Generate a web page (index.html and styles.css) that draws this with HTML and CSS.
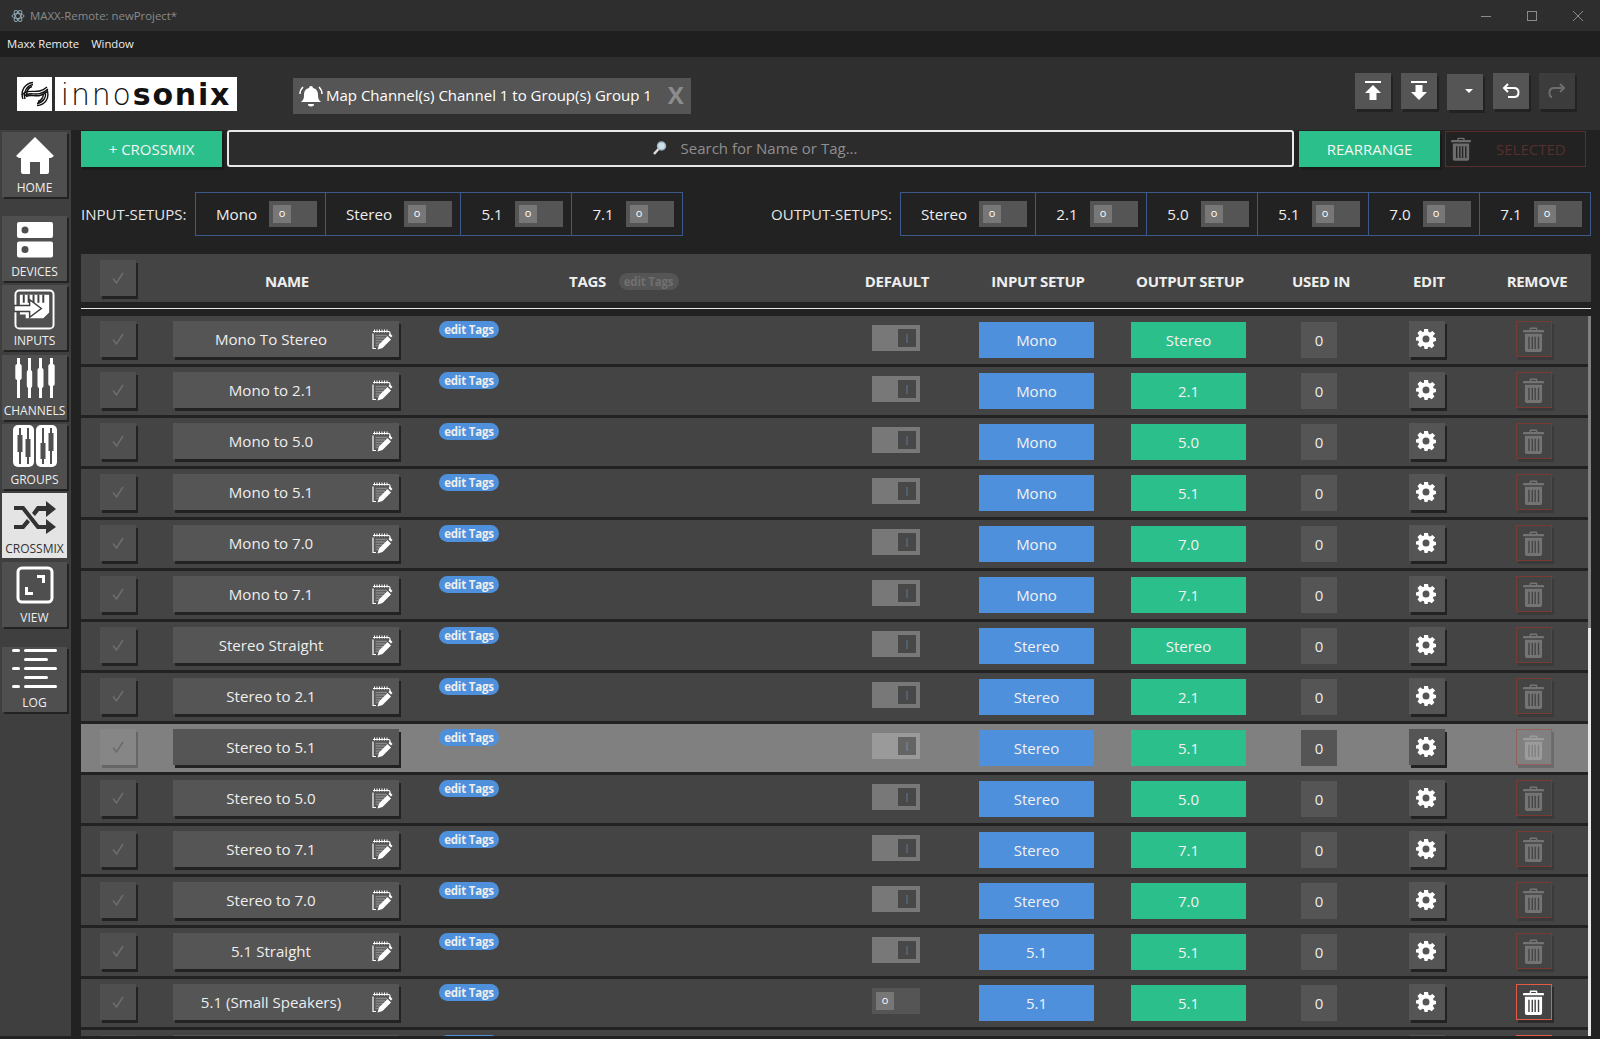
FILE: index.html
```html
<!DOCTYPE html>
<html lang="en">
<head>
    <meta charset="UTF-8">
    <title>MAXX-Remote: newProject*</title>
    <link rel="stylesheet" href="styles.css">
</head>
<body>
    <svg class="defs" width="0" height="0">
        <symbol id="i-note" viewBox="0 0 22 22">
            <path d="M2 5.500V20.500H5M2 3.500H17.500Q19 3.500 19 5V8" fill="none" stroke="#fff" stroke-width="1.200"/>
            <path d="M3.500 1.500v3M6 1.500v3M8.500 1.500v3M11 1.500v3M13.500 1.500v3M16 1.500v3" stroke="#fff" stroke-width="1"/>
            <path d="M4.500 7.500H16M4.500 10H14M4.500 12.500H12M4.500 15H9.500M4.500 17.500H7.500" stroke="#8a8a8a" stroke-width="1.500"/>
            <path d="M6.500 21.500l1.500-5 8.500-8.500 3.500 3.500-8.500 8.500z" fill="#fff"/>
            <path d="M17.500 7l1.500-1.500 2.500 2.500-1.500 1.500z" fill="#fff"/>
        </symbol>
        <symbol id="i-gear" viewBox="0 0 20 20">
            <path fill-rule="evenodd" d="M8 0h4l.5 2.800 1.500.7 2.400-1.600 2.700 2.700L17 7l.5 1.300 2.500.7v3l-2.500.7-.6 1.400 1.500 2.400-2.700 2.700-2.400-1.500-1.300.5L11.500 20h-3l-.5-2.700-1.400-.5-2.400 1.500-2.700-2.700 1.500-2.400-.6-1.400L0 11.500v-3l2.400-.7.6-1.400-1.500-2.400 2.700-2.700 2.400 1.600L8 2.800zM10 6.500a3.500 3.500 0 1 0 0 7 3.500 3.500 0 0 0 0-7z" fill="#fff"/>
        </symbol>
        <symbol id="i-trash" viewBox="0 0 22 26">
            <path fill-rule="evenodd" d="M7 3V1.500Q7 .5 8 .5h6q1 0 1 1V3h6q1 0 1 1v1.500H0V4q0-1 1-1zM8.500 3h5V2h-5zM2 7h18v17q0 2-2 2H4q-2 0-2-2zM5.500 10v13h1.500V10zM9 10v13h1.500V10zM12 10v13h1.500V10zM15.500 10v13H17V10z"/>
        </symbol>
        <symbol id="i-check" viewBox="0 0 14 14">
            <path d="M2 7.500L5.500 12 12 2" fill="none" stroke="currentColor" stroke-width="1.500"/>
        </symbol>
    </svg>

    <div class="titlebar">
        <svg class="app-icon" width="14" height="14" viewBox="0 0 14 14" fill="none" stroke="#8fa6b3" stroke-width="1"><ellipse cx="7" cy="7" rx="6" ry="2.500"/><ellipse cx="7" cy="7" rx="6" ry="2.500" transform="rotate(60 7 7)"/><ellipse cx="7" cy="7" rx="6" ry="2.500" transform="rotate(120 7 7)"/></svg>
        <span class="title-text">MAXX-Remote: newProject*</span>
        <div class="win-controls">
            <svg width="12" height="12" viewBox="0 0 12 12"><path d="M1 6.500H11" stroke="#8a8a8a"/></svg>
            <svg width="12" height="12" viewBox="0 0 12 12"><rect x="1.500" y="1.500" width="9" height="9" fill="none" stroke="#8a8a8a"/></svg>
            <svg width="12" height="12" viewBox="0 0 12 12"><path d="M1 1L11 11M11 1L1 11" stroke="#8a8a8a"/></svg>
        </div>
    </div>
    <div class="menubar"><span>Maxx Remote</span><span>Window</span></div>

    <div class="topbar">
        <div class="logo">
            <div class="logo-mark">
                <svg width="30" height="26" viewBox="0 0 30 26" fill="none" stroke="#111" stroke-width="1.400"><path d="M3 18C0 10 5 2 13 1.500M5 18C3 11 7 4.500 13 3.500M7 16C6 11 8 7 12 5.500"/><path d="M2 14C9 6 17 15 27 6M4 15C11 9 17 18 28 8M6 15.500C12 12 18 19 28 10"/><path d="M27 9C30 17 25 24 17 24.500M25 11C27 16 23 21.500 17 22.500M23 13C24 16 21 19.500 18 20.500"/></svg>
            </div>
            <div class="logo-text"><span>inno</span><b>sonix</b></div>
        </div>
        <div class="notice">
            <svg width="24" height="24" viewBox="0 0 24 24" fill="#fff"><path d="M12 2a2 2 0 0 1 2 2c4 1 5 4 5 7 0 4 1 5 3 7H2c2-2 3-3 3-7 0-3 1-6 5-7a2 2 0 0 1 2-2zM9 20h6a3 2.500 0 0 1-6 0z"/><path d="M4 3Q1 6 1 10M20 3q3 3 3 7" fill="none" stroke="#fff" stroke-width="1.500"/></svg>
            <span class="notice-text">Map Channel(s) Channel 1 to Group(s) Group 1</span>
            <span class="notice-close">X</span>
        </div>
        <div class="tools">
            <div class="tool"><svg width="18" height="22" viewBox="0 0 18 22" fill="#fff"><path d="M1 1H17V3H1zM9 5l8 8H12.500V20H5.500V13H1z"/></svg></div>
            <div class="tool"><svg width="18" height="22" viewBox="0 0 18 22" fill="#fff"><path d="M1 1H17V3H1zM5.500 5H12.500V12H17L9 20 1 12H5.500z"/></svg></div>
            <div class="tool tool-low"><svg class="caret" width="10" height="6" viewBox="0 0 10 6" fill="#fff"><path d="M1 1H9L5 5z"/></svg></div>
            <div class="tool"><svg width="18" height="16" viewBox="0 0 18 16" fill="none" stroke="#fff" stroke-width="2"><path d="M6 1L2 5 6 9" /><path d="M2 5H12Q16.500 5 16.500 9.500T12 14H6"/></svg></div>
            <div class="tool tool-off"><svg width="18" height="16" viewBox="0 0 18 16" fill="none" stroke="#6e6e6e" stroke-width="2"><path d="M12 1L16 5 12 9"/><path d="M16 5H6Q1.500 5 1.500 9.500T4 14"/></svg></div>
        </div>
    </div>

    <div class="app">
        <div class="sidebar">
            <div class="nav-btn nav-home">
                <svg width="38" height="38" viewBox="0 0 38 38" fill="#fff"><path d="M19 1L38 20 35 22H33V36Q33 38 31 38H24V26H14V38H7Q5 38 5 36V22H3L0 20z"/></svg>
                <span>HOME</span>
            </div>
            <div class="nav-btn">
                <svg width="36" height="36" viewBox="0 0 36 36" fill="#fff"><path fill-rule="evenodd" d="M2 0H34Q36 0 36 2V14Q36 16 34 16H2Q0 16 0 14V2Q0 0 2 0zM8 4.500a3.500 3.500 0 1 0 0 7 3.500 3.500 0 0 0 0-7zM2 19.500H34Q36 19.500 36 21.500V33.500Q36 35.500 34 35.500H2Q0 35.500 0 33.500V21.500Q0 19.500 2 19.500zM8 24a3.500 3.500 0 1 0 0 7 3.500 3.500 0 0 0 0-7z"/></svg>
                <span>DEVICES</span>
            </div>
            <div class="nav-btn nav-inputs">
                <svg width="41" height="41" viewBox="0 0 42 42"><rect x="1.500" y="1.500" width="39" height="39" rx="4" fill="none" stroke="#fff" stroke-width="2"/><path d="M6 6H36V24L30 30H12V26H6z" fill="#fff"/><path d="M10 6V14M15 6V14M20 6V14M25 6V14M30 6V14" stroke="#3f3f3f" stroke-width="2"/><path d="M0 17H16V11L28 20 16 29V23H0z" fill="#fff" stroke="#3f3f3f" stroke-width="1.500"/></svg>
                <span>INPUTS</span>
            </div>
            <div class="nav-btn nav-channels">
                <svg width="42" height="40" viewBox="0 0 42 40" fill="#fff"><rect x="3" width="3" height="40"/><rect x="1.300" y="6" width="6.400" height="16" rx="2"/><rect x="14" width="3" height="40"/><rect x="12.800" y="12" width="5.400" height="18" rx="2"/><rect x="25" width="3" height="40"/><rect x="23.500" y="10" width="6" height="20" rx="2"/><rect x="36" width="3" height="40"/><rect x="34.300" y="6" width="6.400" height="22" rx="2"/></svg>
                <span>CHANNELS</span>
            </div>
            <div class="nav-btn nav-groups">
                <svg width="44" height="42" viewBox="0 0 44 42"><rect x="0" y="0" width="21" height="42" rx="5" fill="#fff"/><rect x="23" y="0" width="21" height="42" rx="5" fill="#fff"/><path d="M6 3H8V10H9.500V27H8V39H6V27H4.500V10H6zM14 3H16V14H17.500V32H16V39H14V32H12.500V14H14zM29 3H31V18H32.500V34H31V39H29V34H27.500V18H29zM37 3H39V8H40.500V26H39V39H37V26H35.500V8H37z" fill="#4f4f4f"/></svg>
                <span>GROUPS</span>
            </div>
            <div class="nav-btn nav-active">
                <svg width="42" height="34" viewBox="0 0 42 34" fill="#333"><path d="M0 5H10L25 24H32V18L42 26 32 33V28H23L8 9H0zM0 24H8L13 18 16 21 10 28H0zM23 5H32V0L42 8 32 16V10H25L21 15 18 12z"/></svg>
                <span>CROSSMIX</span>
            </div>
            <div class="nav-btn">
                <svg width="38" height="38" viewBox="0 0 38 38"><rect x="2" y="2" width="34" height="34" rx="4" fill="none" stroke="#fff" stroke-width="3"/><path d="M21 9H29V17H26V12H21zM9 21H12V26H17V29H9z" fill="#fff"/></svg>
                <span>VIEW</span>
            </div>
            <div class="nav-btn nav-log">
                <svg width="46" height="40" viewBox="0 0 46 40" fill="#fff"><rect x="0" y="0" width="8" height="3" rx="1.500"/><rect x="12" y="0" width="33" height="3" rx="1.500"/><rect x="12" y="9" width="24" height="3" rx="1.500"/><rect x="0" y="18" width="8" height="3" rx="1.500"/><rect x="12" y="18" width="33" height="3" rx="1.500"/><rect x="12" y="27" width="24" height="3" rx="1.500"/><rect x="0" y="36" width="8" height="3" rx="1.500"/><rect x="12" y="36" width="33" height="3" rx="1.500"/></svg>
                <span>LOG</span>
            </div>
        </div>

        <div class="main">
            <div class="actions">
                <div class="btn-green">+ CROSSMIX</div>
                <div class="search">
                    <svg width="16" height="16" viewBox="0 0 16 16"><circle cx="9.500" cy="6" r="4" fill="#cfe0ea" stroke="#9fb4c0" stroke-width="1.500"/><path d="M6.500 9L2 14" stroke="#ddd" stroke-width="2.500"/></svg>
                    <span>Search for Name or Tag...</span>
                </div>
                <div class="btn-green">REARRANGE</div>
                <div class="btn-selected">
                    <svg class="trash-off" width="20" height="24"><use href="#i-trash"/></svg>
                    <span>SELECTED</span>
                </div>
            </div>

            <div class="setups">
                <span class="setups-label label-in">INPUT-SETUPS:</span>
                <div class="setup-group">
                    <div class="setup-cell cell-mono"><span>Mono</span><div class="toggle toggle-on"><i>o</i></div></div>
                    <div class="setup-cell cell-wide"><span>Stereo</span><div class="toggle toggle-on"><i>o</i></div></div>
                    <div class="setup-cell"><span>5.1</span><div class="toggle toggle-on"><i>o</i></div></div>
                    <div class="setup-cell"><span>7.1</span><div class="toggle toggle-on"><i>o</i></div></div>
                </div>
                <span class="setups-label label-out">OUTPUT-SETUPS:</span>
                <div class="setup-group">
                    <div class="setup-cell cell-wide-out"><span>Stereo</span><div class="toggle toggle-on"><i>o</i></div></div>
                    <div class="setup-cell"><span>2.1</span><div class="toggle toggle-on"><i>o</i></div></div>
                    <div class="setup-cell"><span>5.0</span><div class="toggle toggle-on"><i>o</i></div></div>
                    <div class="setup-cell"><span>5.1</span><div class="toggle toggle-on"><i>o</i></div></div>
                    <div class="setup-cell"><span>7.0</span><div class="toggle toggle-on"><i>o</i></div></div>
                    <div class="setup-cell"><span>7.1</span><div class="toggle toggle-on"><i>o</i></div></div>
                </div>
            </div>

            <div class="table-head">
                <div class="check check-head"><svg width="14" height="14"><use href="#i-check"/></svg></div>
                <div class="th th-name">NAME</div>
                <div class="th th-tags">TAGS <span class="pill pill-off">edit Tags</span></div>
                <div class="th th-default">DEFAULT</div>
                <div class="th th-input">INPUT SETUP</div>
                <div class="th th-output">OUTPUT SETUP</div>
                <div class="th th-used">USED IN</div>
                <div class="th th-edit">EDIT</div>
                <div class="th th-remove">REMOVE</div>
            </div>
            <div class="head-line"></div>

            <div class="rows-wrap">
            <div class="rows">
                <div class="row"><div class="check"><svg width="14" height="14"><use href="#i-check"/></svg></div><div class="name"><span>Mono To Stereo</span><svg width="22" height="22"><use href="#i-note"/></svg></div><div><span class="pill">edit Tags</span></div><div class="toggle toggle-off"><i>|</i></div><div class="setup-in">Mono</div><div class="setup-out">Stereo</div><div class="used">0</div><div class="edit"><svg width="20" height="20"><use href="#i-gear"/></svg></div><div class="remove"><svg width="21" height="25"><use href="#i-trash"/></svg></div></div>
                <div class="row"><div class="check"><svg width="14" height="14"><use href="#i-check"/></svg></div><div class="name"><span>Mono to 2.1</span><svg width="22" height="22"><use href="#i-note"/></svg></div><div><span class="pill">edit Tags</span></div><div class="toggle toggle-off"><i>|</i></div><div class="setup-in">Mono</div><div class="setup-out">2.1</div><div class="used">0</div><div class="edit"><svg width="20" height="20"><use href="#i-gear"/></svg></div><div class="remove"><svg width="21" height="25"><use href="#i-trash"/></svg></div></div>
                <div class="row"><div class="check"><svg width="14" height="14"><use href="#i-check"/></svg></div><div class="name"><span>Mono to 5.0</span><svg width="22" height="22"><use href="#i-note"/></svg></div><div><span class="pill">edit Tags</span></div><div class="toggle toggle-off"><i>|</i></div><div class="setup-in">Mono</div><div class="setup-out">5.0</div><div class="used">0</div><div class="edit"><svg width="20" height="20"><use href="#i-gear"/></svg></div><div class="remove"><svg width="21" height="25"><use href="#i-trash"/></svg></div></div>
                <div class="row"><div class="check"><svg width="14" height="14"><use href="#i-check"/></svg></div><div class="name"><span>Mono to 5.1</span><svg width="22" height="22"><use href="#i-note"/></svg></div><div><span class="pill">edit Tags</span></div><div class="toggle toggle-off"><i>|</i></div><div class="setup-in">Mono</div><div class="setup-out">5.1</div><div class="used">0</div><div class="edit"><svg width="20" height="20"><use href="#i-gear"/></svg></div><div class="remove"><svg width="21" height="25"><use href="#i-trash"/></svg></div></div>
                <div class="row"><div class="check"><svg width="14" height="14"><use href="#i-check"/></svg></div><div class="name"><span>Mono to 7.0</span><svg width="22" height="22"><use href="#i-note"/></svg></div><div><span class="pill">edit Tags</span></div><div class="toggle toggle-off"><i>|</i></div><div class="setup-in">Mono</div><div class="setup-out">7.0</div><div class="used">0</div><div class="edit"><svg width="20" height="20"><use href="#i-gear"/></svg></div><div class="remove"><svg width="21" height="25"><use href="#i-trash"/></svg></div></div>
                <div class="row"><div class="check"><svg width="14" height="14"><use href="#i-check"/></svg></div><div class="name"><span>Mono to 7.1</span><svg width="22" height="22"><use href="#i-note"/></svg></div><div><span class="pill">edit Tags</span></div><div class="toggle toggle-off"><i>|</i></div><div class="setup-in">Mono</div><div class="setup-out">7.1</div><div class="used">0</div><div class="edit"><svg width="20" height="20"><use href="#i-gear"/></svg></div><div class="remove"><svg width="21" height="25"><use href="#i-trash"/></svg></div></div>
                <div class="row"><div class="check"><svg width="14" height="14"><use href="#i-check"/></svg></div><div class="name"><span>Stereo Straight</span><svg width="22" height="22"><use href="#i-note"/></svg></div><div><span class="pill">edit Tags</span></div><div class="toggle toggle-off"><i>|</i></div><div class="setup-in">Stereo</div><div class="setup-out">Stereo</div><div class="used">0</div><div class="edit"><svg width="20" height="20"><use href="#i-gear"/></svg></div><div class="remove"><svg width="21" height="25"><use href="#i-trash"/></svg></div></div>
                <div class="row"><div class="check"><svg width="14" height="14"><use href="#i-check"/></svg></div><div class="name"><span>Stereo to 2.1</span><svg width="22" height="22"><use href="#i-note"/></svg></div><div><span class="pill">edit Tags</span></div><div class="toggle toggle-off"><i>|</i></div><div class="setup-in">Stereo</div><div class="setup-out">2.1</div><div class="used">0</div><div class="edit"><svg width="20" height="20"><use href="#i-gear"/></svg></div><div class="remove"><svg width="21" height="25"><use href="#i-trash"/></svg></div></div>
                <div class="row row-hover"><div class="check"><svg width="14" height="14"><use href="#i-check"/></svg></div><div class="name"><span>Stereo to 5.1</span><svg width="22" height="22"><use href="#i-note"/></svg></div><div><span class="pill">edit Tags</span></div><div class="toggle toggle-off"><i>|</i></div><div class="setup-in">Stereo</div><div class="setup-out">5.1</div><div class="used">0</div><div class="edit"><svg width="20" height="20"><use href="#i-gear"/></svg></div><div class="remove"><svg width="21" height="25"><use href="#i-trash"/></svg></div></div>
                <div class="row"><div class="check"><svg width="14" height="14"><use href="#i-check"/></svg></div><div class="name"><span>Stereo to 5.0</span><svg width="22" height="22"><use href="#i-note"/></svg></div><div><span class="pill">edit Tags</span></div><div class="toggle toggle-off"><i>|</i></div><div class="setup-in">Stereo</div><div class="setup-out">5.0</div><div class="used">0</div><div class="edit"><svg width="20" height="20"><use href="#i-gear"/></svg></div><div class="remove"><svg width="21" height="25"><use href="#i-trash"/></svg></div></div>
                <div class="row"><div class="check"><svg width="14" height="14"><use href="#i-check"/></svg></div><div class="name"><span>Stereo to 7.1</span><svg width="22" height="22"><use href="#i-note"/></svg></div><div><span class="pill">edit Tags</span></div><div class="toggle toggle-off"><i>|</i></div><div class="setup-in">Stereo</div><div class="setup-out">7.1</div><div class="used">0</div><div class="edit"><svg width="20" height="20"><use href="#i-gear"/></svg></div><div class="remove"><svg width="21" height="25"><use href="#i-trash"/></svg></div></div>
                <div class="row"><div class="check"><svg width="14" height="14"><use href="#i-check"/></svg></div><div class="name"><span>Stereo to 7.0</span><svg width="22" height="22"><use href="#i-note"/></svg></div><div><span class="pill">edit Tags</span></div><div class="toggle toggle-off"><i>|</i></div><div class="setup-in">Stereo</div><div class="setup-out">7.0</div><div class="used">0</div><div class="edit"><svg width="20" height="20"><use href="#i-gear"/></svg></div><div class="remove"><svg width="21" height="25"><use href="#i-trash"/></svg></div></div>
                <div class="row"><div class="check"><svg width="14" height="14"><use href="#i-check"/></svg></div><div class="name"><span>5.1 Straight</span><svg width="22" height="22"><use href="#i-note"/></svg></div><div><span class="pill">edit Tags</span></div><div class="toggle toggle-off"><i>|</i></div><div class="setup-in">5.1</div><div class="setup-out">5.1</div><div class="used">0</div><div class="edit"><svg width="20" height="20"><use href="#i-gear"/></svg></div><div class="remove"><svg width="21" height="25"><use href="#i-trash"/></svg></div></div>
                <div class="row"><div class="check"><svg width="14" height="14"><use href="#i-check"/></svg></div><div class="name"><span>5.1 (Small Speakers)</span><svg width="22" height="22"><use href="#i-note"/></svg></div><div><span class="pill">edit Tags</span></div><div class="toggle toggle-on toggle-row"><i>o</i></div><div class="setup-in">5.1</div><div class="setup-out">5.1</div><div class="used">0</div><div class="edit"><svg width="20" height="20"><use href="#i-gear"/></svg></div><div class="remove remove-on"><svg width="21" height="25"><use href="#i-trash"/></svg></div></div>
                <div class="row"><div class="check"></div><div class="name"></div><div><span class="pill pill-cut"></span></div><div class="toggle toggle-off"></div><div class="setup-in"></div><div class="setup-out"></div><div class="used"></div><div class="edit"></div><div class="remove remove-on"></div></div>
            </div>
            <div class="scrollbar"></div>
            </div>
        </div>
    </div>
</body>
</html>
```
FILE: styles.css
```css
html {
    background: #222;
}
body {
    margin: 0;
    width: 1600px;
    height: 1036px;
    overflow: hidden;
    background: #222;
    color: #eee;
    font-family: "Open Sans", "Noto Sans", sans-serif;
    font-size: 15px;
}
.defs {
    display: block;
    height: 0;
}

/* window chrome */
.titlebar {
    height: 31px;
    background: #2e2e2e;
    display: flex;
    align-items: center;
    padding-left: 11px;
    box-sizing: border-box;
}
.title-text {
    margin-left: 5px;
    font-size: 11.400px;
    color: #8a8a8a;
}
.win-controls {
    margin-left: auto;
    display: flex;
    gap: 34px;
    padding-right: 16px;
}
.menubar {
    height: 26px;
    background: #1f1f1f;
    display: flex;
    align-items: center;
    gap: 12px;
    padding: 0 0 2px 7px;
    box-sizing: border-box;
    font-size: 11.300px;
    color: #eee;
}
.topbar {
    height: 73px;
    background: #2f2f2f;
    display: flex;
    align-items: flex-start;
}
.logo {
    display: flex;
    gap: 3px;
    margin: 20px 0 0 17px;
}
.logo-mark {
    width: 35px;
    height: 34px;
    background: #fff;
    display: flex;
    align-items: center;
    justify-content: center;
}
.logo-text {
    width: 182px;
    height: 34px;
    background: #fff;
    color: #111;
    font-family: "DejaVu Sans", sans-serif;
    font-size: 30px;
    line-height: 35px;
    text-align: center;
    letter-spacing: 1.800px;
    white-space: nowrap;
}
.logo-text span {
    font-weight: 200;
}
.notice {
    margin: 21px 0 0 56px;
    width: 398px;
    height: 36px;
    flex: none;
    background: #555;
    display: flex;
    align-items: center;
    padding-left: 6px;
    box-sizing: border-box;
    color: #fff;
    font-size: 15px;
    white-space: nowrap;
}
.notice-text {
    margin: 0 0 2px 3px;
}
.notice-close {
    margin: 0 0 4px 16px;
    font-size: 24px;
    font-weight: 700;
    color: #8c8c8c;
}
.tools {
    margin: 16px 0 0 664px;
    display: flex;
    gap: 10px;
    align-items: flex-start;
}
.tool {
    width: 36px;
    height: 36px;
    background: #555;
    box-shadow: 2px 3px 0 #222;
    display: flex;
    align-items: center;
    justify-content: center;
}
.tool-low {
    margin-top: 1px;
}
.tool-off {
    background: #3c3c3c;
}
.caret {
    margin: 0 0 3px 8px;
}

/* layout */
.app {
    display: flex;
    height: 906px;
}
.sidebar {
    width: 71px;
    flex: none;
    background: #3f3f3f;
    padding: 2px 0 0 2px;
    box-sizing: border-box;
    display: flex;
    flex-direction: column;
    gap: 4px;
}
.nav-btn {
    width: 65px;
    height: 65px;
    background: #4f4f4f;
    box-shadow: 2px 2px 0 #222;
    display: flex;
    flex-direction: column;
    align-items: center;
    justify-content: flex-end;
    color: #eee;
    font-size: 12px;
    line-height: 16px;
    padding-bottom: 1px;
    box-sizing: border-box;
}
.nav-btn svg {
    margin-bottom: 6px;
    flex: none;
}
.nav-home {
    margin-bottom: 15px;
}
.nav-btn.nav-inputs svg {
    margin-bottom: 3px;
}
.nav-channels {
    margin-top: 1px;
}
.nav-btn.nav-channels svg,
.nav-btn.nav-groups svg {
    margin-bottom: 5px;
}
.nav-log {
    margin-top: 16px;
}
.nav-active {
    background: #e4e4e4;
    color: #333;
    box-shadow: none;
}
.main {
    margin-left: 10px;
    width: 1510px;
    flex: none;
}

/* actions row */
.actions {
    display: flex;
    gap: 5px;
    height: 37px;
    align-items: center;
}
.btn-green {
    width: 141px;
    height: 36px;
    background: #2bbf8b;
    color: #f4f4f4;
    box-shadow: 2px 3px 0 #1a1a1a;
    display: flex;
    align-items: center;
    justify-content: center;
    font-size: 15px;
    flex: none;
}
.search {
    width: 1067px;
    height: 37px;
    box-sizing: border-box;
    border: 2px solid #e8e8e8;
    border-radius: 3px;
    background: #2c2c2c;
    display: flex;
    align-items: center;
    justify-content: center;
    gap: 13px;
    color: #8f8f8f;
    font-size: 15px;
    padding: 0 12px 2px 0;
    flex: none;
}
.btn-selected {
    width: 141px;
    height: 36px;
    box-sizing: border-box;
    border: 1px solid #5a2e29;
    color: #55302c;
    display: flex;
    align-items: center;
    font-size: 15px;
    padding-left: 5px;
    flex: none;
}
.btn-selected span {
    margin-left: 25px;
}
.trash-off {
    fill: #6c6c6c;
}

/* setups row */
.setups {
    display: flex;
    align-items: center;
    margin-top: 25px;
    height: 44px;
}
.setups-label {
    font-size: 15px;
    color: #e6e6e6;
}
.label-in {
    width: 115px;
}
.label-out {
    margin-left: 88px;
    width: 130px;
}
.setup-group {
    display: flex;
    height: 44px;
    border: 1px solid #3b5a8a;
    box-sizing: border-box;
}
.setup-cell {
    width: 111px;
    box-sizing: border-box;
    display: flex;
    align-items: center;
    padding-right: 8px;
    border-left: 1px solid #3b5a8a;
}
.setup-cell:first-child {
    border-left: 0;
}
.setup-cell > span {
    flex: 1;
    text-align: center;
    font-size: 15.200px;
    padding-left: 8px;
}
.cell-mono {
    width: 129px;
}
.cell-wide {
    width: 135px;
}
.cell-wide-out {
    width: 134px;
}
.toggle {
    width: 48px;
    height: 26px;
    flex: none;
    display: flex;
    align-items: center;
    padding: 0 4px;
    box-sizing: border-box;
}
.toggle i {
    width: 18px;
    height: 18px;
    display: block;
    font-style: normal;
    text-align: center;
    font-size: 11px;
    line-height: 16px;
}
.toggle-on {
    background: #555;
}
.toggle-on i {
    background: #777;
    color: #fff;
}
.toggle-off {
    background: #787878;
    justify-content: flex-end;
}
.toggle-off i {
    background: #484848;
    color: #8a8a8a;
    font-size: 9px;
    line-height: 18px;
}

/* table */
.table-head {
    margin-top: 18px;
    height: 48px;
    background: #444;
    position: relative;
    display: grid;
    grid-template-columns: 19px 36px 1fr;
    align-items: center;
}
.th {
    position: absolute;
    top: 0;
    line-height: 54px;
    font-weight: 700;
    font-size: 15px;
    letter-spacing: -0.3px;
    color: #eee;
    transform: translateX(-50%);
    white-space: nowrap;
}
.th-name { left: 206px; }
.th-tags { left: 488px; transform: none; }
.th-default { left: 816px; }
.th-input { left: 957px; }
.th-output { left: 1109px; }
.th-used { left: 1240px; }
.th-edit { left: 1348px; }
.th-remove { left: 1456px; }
.th-tags .pill {
    margin-left: 9px;
}
.check-head {
    grid-column: 2;
}
.head-line {
    height: 1px;
    margin-top: 6px;
    background: #e8e8e8;
}
.rows-wrap {
    margin-top: 7px;
    height: 720px;
    display: flex;
}
.rows {
    flex: 1;
    overflow: hidden;
    display: flex;
    flex-direction: column;
    gap: 3px;
}
.scrollbar {
    width: 3px;
    background: linear-gradient(#808080 312px, #e8e8e8 312px);
}
.row {
    height: 48px;
    flex: none;
    background: #444;
    padding-left: 19px;
    display: grid;
    grid-template-columns: 73px 266px 433px 107px 152px 170px 108px 107px 1fr;
    align-items: start;
}
.check {
    width: 36px;
    height: 36px;
    margin-top: 5px;
    background: #4f4f4f;
    color: #6e6e6e;
    box-shadow: 2px 3px 0 #222;
    display: flex;
    align-items: center;
    justify-content: center;
}
.check-head {
    margin-top: 0;
}
.name {
    width: 226px;
    height: 36px;
    margin-top: 5px;
    background: #555;
    box-shadow: 2px 3px 0 #222;
    display: flex;
    align-items: center;
    font-size: 15.100px;
    color: #eee;
    box-sizing: border-box;
    padding-right: 6px;
}
.name span {
    flex: 1;
    text-align: center;
    white-space: nowrap;
    padding-right: 2px;
}
.pill {
    display: inline-block;
    width: 60px;
    height: 17px;
    border-radius: 9px;
    background: #4f90dc;
    color: #eee;
    font-size: 11.500px;
    font-weight: 700;
    line-height: 18px;
    text-align: center;
    letter-spacing: -0.2px;
    margin-top: 5px;
    vertical-align: top;
}
.pill-off {
    background: #555;
    color: #707070;
    margin-top: 19px;
}
.row .toggle {
    margin-top: 9px;
}
.setup-in, .setup-out {
    width: 115px;
    height: 36px;
    margin-top: 6px;
    display: flex;
    align-items: center;
    justify-content: center;
    color: #f2f2f2;
    font-size: 15px;
}
.setup-in {
    background: #4f90dc;
}
.setup-out {
    background: #2bbf8b;
}
.used {
    width: 36px;
    height: 36px;
    margin-top: 6px;
    background: #555;
    display: flex;
    align-items: center;
    justify-content: center;
    font-size: 15px;
    color: #eee;
}
.edit {
    width: 36px;
    height: 36px;
    margin-top: 5px;
    background: #555;
    box-shadow: 2px 3px 0 #222;
    display: flex;
    align-items: center;
    justify-content: center;
    padding-right: 2px;
    box-sizing: border-box;
}
.remove {
    width: 36px;
    height: 36px;
    margin-top: 5px;
    box-sizing: border-box;
    border: 1px solid #763b35;
    box-shadow: 2px 3px 0 #3a3a3a;
    display: flex;
    align-items: center;
    justify-content: center;
    padding-right: 1px;
    fill: #747474;
}
.remove-on {
    border-color: #e25a48;
    box-shadow: 2px 3px 0 #2c2c2c;
    fill: #fff;
}

/* highlighted row */
.row-hover {
    background: #808080;
}
.row-hover .check {
    background: #868686;
    color: #6a6a6a;
    box-shadow: 2px 3px 0 #666;
}
.row-hover .toggle-off {
    background: #9a9a9a;
}
.row-hover .toggle-off i {
    background: #646464;
    color: #a0a0a0;
}
.row-hover .remove {
    border-color: #8f625c;
    box-shadow: 2px 3px 0 #6a6a6a;
    fill: #9c9c9c;
}
```
